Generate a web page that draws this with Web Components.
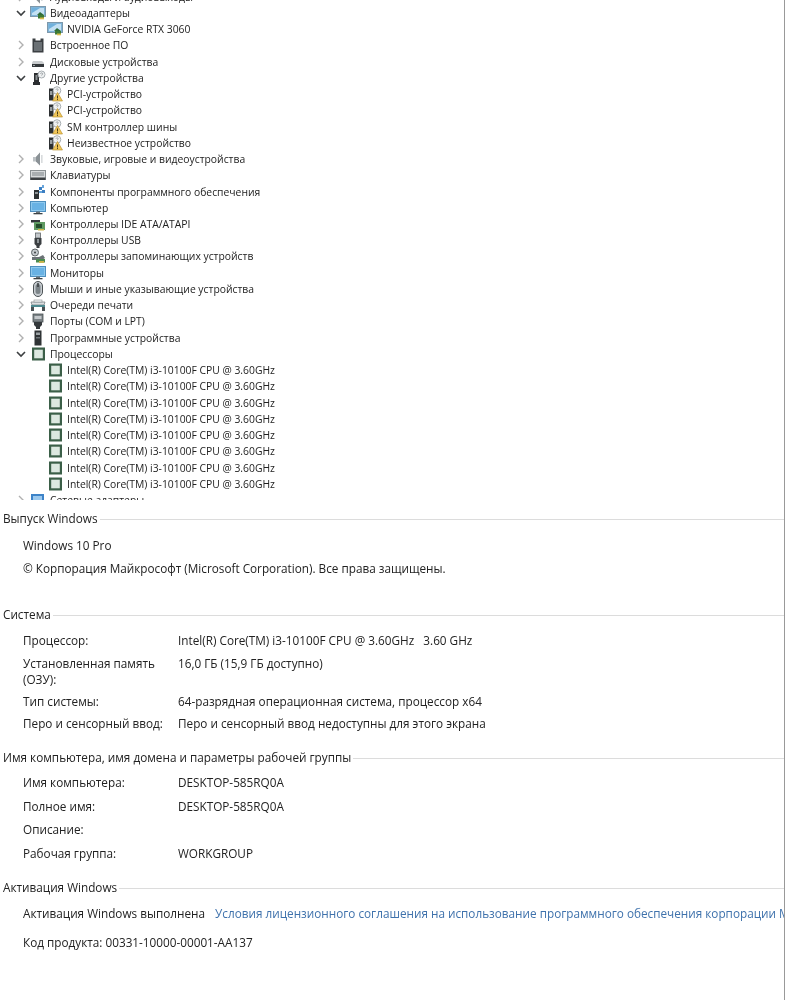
<!DOCTYPE html>
<html lang="ru">
<head>
<meta charset="utf-8">
<title>Диспетчер устройств и система</title>
<style>
	html, body { margin: 0; padding: 0; background: #fff; }
	body { width: 785px; height: 1000px; overflow: hidden; font-family: "Open Sans", "Noto Sans", "Liberation Sans", sans-serif; color: #222; }
</style>
</head>
<body>
<dm-window>
	<dm-tree>
		<dm-row icon="audio" state="closed" style="margin-top:-11.4px">Аудиовходы и аудиовыходы</dm-row>
		<dm-row icon="monitor" state="open">Видеоадаптеры</dm-row>
		<dm-row icon="monitor" level="1">NVIDIA GeForce RTX 3060</dm-row>
		<dm-row icon="firmware" state="closed">Встроенное ПО</dm-row>
		<dm-row icon="disk" state="closed">Дисковые устройства</dm-row>
		<dm-row icon="unknown" state="open">Другие устройства</dm-row>
		<dm-row icon="warn" level="1">PCI-устройство</dm-row>
		<dm-row icon="warn" level="1">PCI-устройство</dm-row>
		<dm-row icon="warn" level="1">SM контроллер шины</dm-row>
		<dm-row icon="warn" level="1">Неизвестное устройство</dm-row>
		<dm-row icon="audio" state="closed">Звуковые, игровые и видеоустройства</dm-row>
		<dm-row icon="keyboard" state="closed">Клавиатуры</dm-row>
		<dm-row icon="software" state="closed">Компоненты программного обеспечения</dm-row>
		<dm-row icon="screen" state="closed">Компьютер</dm-row>
		<dm-row icon="ide" state="closed">Контроллеры IDE ATA/ATAPI</dm-row>
		<dm-row icon="usb" state="closed">Контроллеры USB</dm-row>
		<dm-row icon="storage" state="closed">Контроллеры запоминающих устройств</dm-row>
		<dm-row icon="screen" state="closed">Мониторы</dm-row>
		<dm-row icon="mouse" state="closed">Мыши и иные указывающие устройства</dm-row>
		<dm-row icon="printer" state="closed">Очереди печати</dm-row>
		<dm-row icon="port" state="closed">Порты (COM и LPT)</dm-row>
		<dm-row icon="progdev" state="closed">Программные устройства</dm-row>
		<dm-row icon="cpu" state="open">Процессоры</dm-row>
		<dm-row icon="cpu" level="1">Intel(R) Core(TM) i3-10100F CPU @ 3.60GHz</dm-row>
		<dm-row icon="cpu" level="1">Intel(R) Core(TM) i3-10100F CPU @ 3.60GHz</dm-row>
		<dm-row icon="cpu" level="1">Intel(R) Core(TM) i3-10100F CPU @ 3.60GHz</dm-row>
		<dm-row icon="cpu" level="1">Intel(R) Core(TM) i3-10100F CPU @ 3.60GHz</dm-row>
		<dm-row icon="cpu" level="1">Intel(R) Core(TM) i3-10100F CPU @ 3.60GHz</dm-row>
		<dm-row icon="cpu" level="1">Intel(R) Core(TM) i3-10100F CPU @ 3.60GHz</dm-row>
		<dm-row icon="cpu" level="1">Intel(R) Core(TM) i3-10100F CPU @ 3.60GHz</dm-row>
		<dm-row icon="cpu" level="1">Intel(R) Core(TM) i3-10100F CPU @ 3.60GHz</dm-row>
		<dm-row icon="network" state="closed">Сетевые адаптеры</dm-row>
	</dm-tree>

	<sys-section heading="Выпуск Windows" style="height:96px">
		<sys-line style="height:23px">Windows 10 Pro</sys-line>
		<sys-line style="height:23px">© Корпорация Майкрософт (Microsoft Corporation). Все права защищены.</sys-line>
	</sys-section>

	<sys-section heading="Система" style="height:143px">
		<sys-field label="Процессор:" style="height:22.5px">Intel(R) Core(TM) i3-10100F CPU @ 3.60GHz&nbsp;&nbsp; 3.60 GHz</sys-field>
		<sys-field label="Установленная память (ОЗУ):" style="height:38px">16,0 ГБ (15,9 ГБ доступно)</sys-field>
		<sys-field label="Тип системы:" style="height:22.5px">64-разрядная операционная система, процессор x64</sys-field>
		<sys-field label="Перо и сенсорный ввод:" style="height:22.5px">Перо и сенсорный ввод недоступны для этого экрана</sys-field>
	</sys-section>

	<sys-section heading="Имя компьютера, имя домена и параметры рабочей группы" style="height:130px">
		<sys-field label="Имя компьютера:" style="margin-top:-1px">DESKTOP-585RQ0A</sys-field>
		<sys-field label="Полное имя:">DESKTOP-585RQ0A</sys-field>
		<sys-field label="Описание:"></sys-field>
		<sys-field label="Рабочая группа:">WORKGROUP</sys-field>
	</sys-section>

	<sys-section heading="Активация Windows">
		<sys-line style="height:22px;margin-bottom:6px">Активация Windows выполнена<a slot="link">Условия лицензионного соглашения на использование программного обеспечения корпорации Майкрософт</a></sys-line>
		<sys-line>Код продукта:&nbsp;00331-10000-00001-AA137</sys-line>
	</sys-section>
</dm-window>

<script>
(function() {
	// simple 16x16 device icons, drawn by hand from the reference
	const ICONS = {
		monitor: `<rect x="0.5" y="1.5" width="15" height="10" fill="#7fb4d8" stroke="#7d98ab"/><rect x="2" y="3" width="12" height="7" fill="#c3e0f3"/><path d="M2 3h8l-8 5z" fill="#6fb0dc"/><path d="M7 10l3-3 4 3z" fill="#2e6b3a"/><rect x="8" y="10" width="6" height="3.5" fill="#3d7a35"/><rect x="10" y="12.500" width="4" height="1.800" fill="#d6b94a"/>`,
		firmware: `<path d="M2.5 1.5h3v2h5v-2h3v14h-11z" fill="#3b3f42"/><rect x="4" y="5" width="8" height="9" fill="#6a7074"/>`,
		disk: `<path d="M3 7h9l2 2v3H2V9z" fill="#c9ccce"/><rect x="2" y="10" width="12" height="3" fill="#34383b"/><rect x="3" y="11" width="2" height="1" fill="#9fa4a7"/>`,
		unknown: `<path d="M4 3h5v12H4z" fill="#2c2f31"/><rect x="3" y="12" width="7" height="3" fill="#2c2f31"/><rect x="5.5" y="5" width="2" height="5" fill="#8a8f92"/><circle cx="11.5" cy="4.5" r="3.5" fill="#eef0f1" stroke="#a7adb1"/><path d="M10.4 3.7c.3-1.2 2.3-1 2.2.2 0 .8-1 .9-1 1.6" fill="none" stroke="#858b8f" stroke-width=".8"/>`,
		warn: `<path d="M2 2.500h4.500v12H2z" fill="#2c2f31"/><rect x="3" y="5" width="2.4" height="4" fill="#9aa0a3"/><circle cx="10" cy="4.5" r="3.800" fill="#f2f3f3" stroke="#a7adb1"/><path d="M9 3.600c.3-1.200 2.200-1 2.100.2 0 .7-.9.8-1 1.500" fill="none" stroke="#858b8f" stroke-width=".8"/><path d="M10.500 6.500l5 8.500h-10z" fill="#f0c65a" stroke="#b38c2a" stroke-width=".6"/><rect x="10" y="9.500" width="1" height="3" fill="#4b3c14"/><rect x="10" y="13.100" width="1" height="1" fill="#4b3c14"/>`,
		audio: `<path d="M3 6h3l4-4.500v13l-4-4H3z" fill="#bcc1c4"/><path d="M6 6l4-4.500v13l-4-4z" fill="#8b9296"/><rect x="11" y="4" width="1.600" height="8" fill="#d8dbdd"/>`,
		keyboard: `<rect x="0.500" y="3.500" width="15" height="9" fill="#d7dadc" stroke="#8a9093"/><rect x="2" y="5" width="12" height="4" fill="#a9aeb1"/><rect x="0.500" y="10.500" width="15" height="2.500" fill="#3d4144"/>`,
		software: `<rect x="4" y="6" width="5" height="9" fill="#2d3133"/><rect x="5" y="8" width="3" height="2" fill="#8e9497"/><rect x="9" y="3" width="3" height="3" fill="#3d7fc2"/><rect x="12" y="6" width="3" height="3" fill="#3d7fc2"/><rect x="9" y="7" width="3" height="2" fill="#69a6dc"/><rect x="12" y="1" width="2" height="3" fill="#69a6dc"/>`,
		screen: `<rect x="0.500" y="1.500" width="15" height="10" fill="#8ec9ee" stroke="#4e8fbe"/><rect x="2" y="3" width="12" height="7" fill="#69b2e4"/><rect x="6" y="11.500" width="4" height="2" fill="#6d7579"/><rect x="3.500" y="13" width="9" height="1.300" fill="#3d4346"/>`,
		ide: `<rect x="1" y="4" width="9" height="2.500" fill="#33373a"/><rect x="4" y="6" width="11" height="8" fill="#5f9a62"/><rect x="6" y="8" width="6" height="4" fill="#244d2b"/><rect x="8" y="13" width="6" height="1.500" fill="#d2b64a"/>`,
		usb: `<rect x="5.500" y="1" width="5" height="5" fill="#c4c8cb" stroke="#5f6568" stroke-width=".8"/><path d="M4.500 6h7v6l-2 2v2h-3v-2l-2-2z" fill="#3a3e41"/><rect x="7" y="7" width="2" height="4" fill="#8d9396"/>`,
		storage: `<circle cx="5" cy="4.500" r="3.500" fill="#c5cacd" stroke="#5d6366"/><circle cx="5" cy="4.500" r="1" fill="#3d4144"/><path d="M2 9h7l4-2 2 3-3 2H2z" fill="#6b7276"/><rect x="6" y="11" width="9" height="3.500" fill="#4b8a4f"/><rect x="9" y="13" width="5" height="1.800" fill="#cdb447"/>`,
		mouse: `<rect x="3.500" y="0.500" width="9" height="15" rx="4.500" fill="#c7ccd0" stroke="#4d5356"/><rect x="5.500" y="3" width="5" height="10" rx="2.500" fill="#7c8488"/><rect x="7.300" y="2" width="1.400" height="4" fill="#33373a"/>`,
		printer: `<path d="M1 5h14l-1 3H2z" fill="#dcdfe1" stroke="#71777a" stroke-width=".7"/><rect x="1" y="8" width="14" height="2" fill="#4e8a90"/><path d="M1 10h3v4H1zM12 10h3v4h-3z" fill="#4a5053"/><rect x="4" y="3" width="8" height="2" fill="#f4f5f5" stroke="#8a9093" stroke-width=".6"/>`,
		port: `<rect x="3" y="1" width="10" height="8" fill="#7b8286" stroke="#4a5053" stroke-width=".8"/><rect x="4.500" y="3" width="7" height="3" fill="#c4c8cb"/><path d="M4 9h8v3l-2 2v2H6v-2l-2-2z" fill="#34383b"/>`,
		progdev: `<rect x="4.500" y="0.500" width="7" height="15" fill="#2f3335"/><rect x="6" y="2.500" width="4" height="2.500" fill="#9aa0a3"/><rect x="6" y="7" width="4" height="1.500" fill="#6d7377"/>`,
		cpu: `<rect x="2" y="1.500" width="13" height="13" fill="#3b5f48"/><rect x="4.200" y="3.700" width="8.600" height="8.600" fill="#dce8e0"/>`,
		network: `<rect x="1" y="2" width="13" height="8" fill="#3d83c8"/><rect x="3" y="4" width="9" height="4" fill="#9cc9ee"/>`
	};

	let treeTemplate = document.createElement("template");
	treeTemplate.innerHTML = `
		<style>
		:host { display: block; height: 500px; margin-bottom: 10px; overflow: hidden; }
		</style>
		<slot></slot>
	`;

	class DmTree extends HTMLElement {
		constructor() {
			super();
			this.attachShadow({mode: "open"}).appendChild(treeTemplate.content.cloneNode(true));
		}
	}
	customElements.define("dm-tree", DmTree);

	let rowTemplate = document.createElement("template");
	rowTemplate.innerHTML = `
		<style>
		:host {
			display: flex;
			align-items: center;
			height: 16.24px;
			padding-left: 16px;
			font-size: 10.35px;
			line-height: 16px;
			white-space: nowrap;
		}
		:host([level="1"]) { padding-left: 47px; }
		#arrow { width: 10px; height: 10px; margin-right: 4px; flex: none; }
		:host([level="1"]) #arrow { display: none; }
		#icon { width: 16px; height: 16px; margin-right: 4px; flex: none; }
		</style>
		<svg id="arrow" viewBox="0 0 10 10"></svg>
		<svg id="icon" viewBox="0 0 16 16"></svg>
		<slot></slot>
	`;

	class DmRow extends HTMLElement {
		constructor() {
			super();
			this._shadowRoot = this.attachShadow({mode: "open"});
			this._shadowRoot.appendChild(rowTemplate.content.cloneNode(true));
		}

		connectedCallback() {
			this._shadowRoot.getElementById("icon").innerHTML = ICONS[this.getAttribute("icon")] || "";
			let state = this.getAttribute("state");
			let arrow = this._shadowRoot.getElementById("arrow");
			if (state === "open") {
				arrow.innerHTML = `<path d="M1 3l4 4 4-4" fill="none" stroke="#3c3f41" stroke-width="1.600"/>`;
			} else if (state === "closed") {
				arrow.innerHTML = `<path d="M3 1l4 4-4 4" fill="none" stroke="#b0b0b0" stroke-width="1.400"/>`;
			}
		}
	}
	customElements.define("dm-row", DmRow);

	let sectionTemplate = document.createElement("template");
	sectionTemplate.innerHTML = `
		<style>
		:host { display: block; font-size: 11.75px; }
		#head { display: flex; align-items: center; gap: 2px; height: 16px; padding-left: 3px; white-space: nowrap; }
		#rule { flex: 1; height: 1px; margin-top: 2px; background: #dcdcdc; }
		#body { display: flex; flex-direction: column; padding-top: 7px; padding-left: 23px; }
		</style>
		<div id="head"><span id="title"></span><div id="rule"></div></div>
		<div id="body"><slot></slot></div>
	`;

	class SysSection extends HTMLElement {
		constructor() {
			super();
			this._shadowRoot = this.attachShadow({mode: "open"});
			this._shadowRoot.appendChild(sectionTemplate.content.cloneNode(true));
		}

		connectedCallback() {
			this._shadowRoot.getElementById("title").textContent = this.getAttribute("heading");
		}
	}
	customElements.define("sys-section", SysSection);

	let lineTemplate = document.createElement("template");
	lineTemplate.innerHTML = `
		<style>
		:host { display: flex; height: 24px; align-items: center; white-space: nowrap; overflow: hidden; }
		::slotted(a) { color: #3f72ac; margin-left: 10px; }
		</style>
		<slot></slot><slot name="link"></slot>
	`;

	class SysLine extends HTMLElement {
		constructor() {
			super();
			this.attachShadow({mode: "open"}).appendChild(lineTemplate.content.cloneNode(true));
		}
	}
	customElements.define("sys-line", SysLine);

	let fieldTemplate = document.createElement("template");
	fieldTemplate.innerHTML = `
		<style>
		:host { display: grid; grid-template-columns: 155px 1fr; height: 23.7px; line-height: 16px; box-sizing: border-box; padding-top: 3px; white-space: nowrap; }
		#label { white-space: normal; padding-right: 4px; }
		</style>
		<div id="label"></div>
		<div><slot></slot></div>
	`;

	class SysField extends HTMLElement {
		constructor() {
			super();
			this._shadowRoot = this.attachShadow({mode: "open"});
			this._shadowRoot.appendChild(fieldTemplate.content.cloneNode(true));
		}

		connectedCallback() {
			this._shadowRoot.getElementById("label").textContent = this.getAttribute("label");
		}
	}
	customElements.define("sys-field", SysField);

	let windowTemplate = document.createElement("template");
	windowTemplate.innerHTML = `
		<style>
		:host { display: block; height: 1000px; overflow: hidden; box-sizing: border-box; border-right: 1px solid #999; filter: blur(0.45px); }
		</style>
		<slot></slot>
	`;

	class DmWindow extends HTMLElement {
		constructor() {
			super();
			this.attachShadow({mode: "open"}).appendChild(windowTemplate.content.cloneNode(true));
		}
	}
	customElements.define("dm-window", DmWindow);
})();
</script>
</body>
</html>
